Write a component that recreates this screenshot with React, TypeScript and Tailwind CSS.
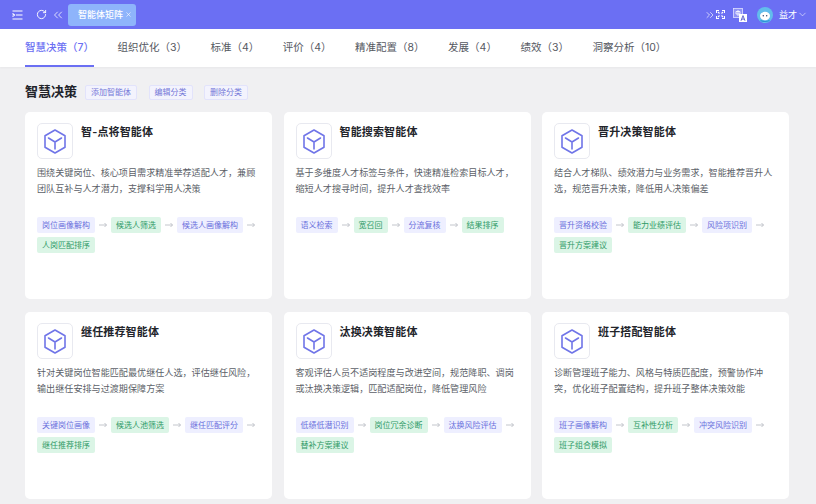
import React from "react";
import { RotateCw, ChevronsLeft, ChevronsRight, ChevronDown, X } from "lucide-react";

const FONT = "font-['Inter','Noto_Sans_CJK_SC',sans-serif]";

const tabs = [
  "智慧决策（7）",
  "组织优化（3）",
  "标准（4）",
  "评价（4）",
  "精准配置（8）",
  "发展（4）",
  "绩效（3）",
  "洞察分析（10）",
];

const cards = [
  {
    title: "智-点将智能体",
    desc: ["围绕关键岗位、核心项目需求精准举荐适配人才，兼顾", "团队互补与人才潜力，支撑科学用人决策"],
    steps: ["岗位画像解构", "候选人筛选", "候选人画像解构", "人岗匹配排序"],
  },
  {
    title: "智能搜索智能体",
    desc: ["基于多维度人才标签与条件，快速精准检索目标人才，", "缩短人才搜寻时间，提升人才查找效率"],
    steps: ["语义检索", "宽召回", "分流复核", "结果排序"],
  },
  {
    title: "晋升决策智能体",
    desc: ["结合人才梯队、绩效潜力与业务需求，智能推荐晋升人", "选，规范晋升决策，降低用人决策偏差"],
    steps: ["晋升资格校验", "能力业绩评估", "风险项识别", "晋升方案建议"],
  },
  {
    title: "继任推荐智能体",
    desc: ["针对关键岗位智能匹配最优继任人选，评估继任风险，", "输出继任安排与过渡期保障方案"],
    steps: ["关键岗位画像", "候选人池筛选", "继任匹配评分", "继任推荐排序"],
  },
  {
    title: "汰换决策智能体",
    desc: ["客观评估人员不适岗程度与改进空间，规范降职、调岗", "或汰换决策逻辑，匹配适配岗位，降低管理风险"],
    steps: ["低绩低潜识别", "岗位冗余诊断", "汰换风险评估", "替补方案建议"],
  },
  {
    title: "班子搭配智能体",
    desc: ["诊断管理班子能力、风格与特质匹配度，预警协作冲", "突，优化班子配置结构，提升班子整体决策效能"],
    steps: ["班子画像解构", "互补性分析", "冲突风险识别", "班子组合模拟"],
  },
];

const CubeIcon = () => (
  <svg width="22" height="25" viewBox="0 0 22 25" fill="none" stroke="#7075e8" strokeWidth="1.6" strokeLinejoin="round">
    <path d="M11 1 L21 6.800 V18.200 L11 24 L1 18.200 V6.800 Z" />
    <path d="M4.500 9 L11 13 L17.500 9 M11 13 V20" strokeLinecap="round" />
  </svg>
);

const MenuIcon = () => (
  <svg width="11" height="10" viewBox="0 0 11 10" fill="none" stroke="#fff" strokeWidth="1.2">
    <path d="M0.500 1h10M4 5h6.500M0.500 9h10M0.500 3.500 2.500 5 0.500 6.500" />
  </svg>
);

const TranslateIcon = () => (
  <svg width="14" height="14" viewBox="0 0 14 14">
    <rect x="0.500" y="0.500" width="9" height="9" fill="#8f92f5" stroke="#dfe0ff" strokeWidth="0.800" />
    <path d="M3 3.500h4v2.500H3zM5 2v6" fill="none" stroke="#fff" strokeWidth="0.800" />
    <rect x="6" y="6" width="8" height="8" fill="#fff" />
    <path d="M8 12.800 10 7.600 12 12.800M8.800 11.100h2.400" fill="none" stroke="#5558c8" strokeWidth="0.900" />
  </svg>
);

const Avatar = () => (
  <svg width="16" height="16" viewBox="0 0 16 16">
    <circle cx="8" cy="8" r="8" fill="#62bdec" />
    <ellipse cx="8" cy="9" rx="5" ry="4.200" fill="#fff" />
    <circle cx="6.300" cy="8.800" r="0.700" fill="#2c3e66" />
    <circle cx="9.700" cy="8.800" r="0.700" fill="#2c3e66" />
    <path d="M3.500 13.500Q8 15.500 12.500 13.500" fill="none" stroke="#2f8fd8" strokeWidth="1.200" />
  </svg>
);

const Arrow = () => (
  <span className="flex w-[16px] justify-center">
    <svg width="8" height="6" viewBox="0 0 8 6" fill="none" stroke="#b4b7bf" strokeWidth="0.800">
      <path d="M0 3h7.500M5.500 1 7.500 3 5.500 5" />
    </svg>
  </span>
);

const Step = ({ label, green }: { label: string; green: boolean }) => (
  <span
    className={`flex h-[16px] items-center rounded-[2px] px-[5px] text-[8px] leading-none ${
      green ? "bg-[#dbf5e6] text-[#2f9a66]" : "bg-[#eeefff] text-[#6a6fdc]"
    }`}
  >
    {label}
  </span>
);

const AgentCard = ({ title, desc, steps }: (typeof cards)[number]) => (
  <div className="h-[187px] rounded-[5px] bg-white px-[12px] pt-[11px]">
    <div className="flex gap-[8px]">
      <div className="flex h-[36px] w-[36px] items-center justify-center rounded-[5px] border border-[#e8e9f0] bg-white">
        <CubeIcon />
      </div>
      <div className="mt-[1px] text-[11px] leading-[16px] font-semibold tracking-[0.15px] text-[#22242a]">{title}</div>
    </div>
    <div className="mt-[6px] text-[9.100px] leading-[16px] whitespace-nowrap text-[#5c5f68]">
      {desc.map((line) => (
        <div key={line}>{line}</div>
      ))}
    </div>
    <div className="mt-[20px] flex flex-wrap items-center gap-y-[3.500px]">
      {steps.map((step, i) => (
        <React.Fragment key={step}>
          <Step label={step} green={i % 2 === 1} />
          {i < steps.length - 1 && <Arrow />}
        </React.Fragment>
      ))}
    </div>
  </div>
);

export default function App() {
  return (
    <div className={`flex h-[504px] w-[816px] flex-col overflow-hidden bg-[#f0f0f2] ${FONT}`}>
      {/* Top bar */}
      <div className="flex h-[29px] items-center bg-[#6b6ff3] pr-[8px] pl-[12px] text-white">
        <MenuIcon />
        <RotateCw size={11} strokeWidth={2} className="ml-[13px]" />
        <ChevronsLeft size={14} strokeWidth={1.300} className="ml-[4px]" />
        <div className="ml-[3px] flex h-[22px] w-[68px] items-center rounded-[3px] bg-[#8eb4fb] pl-[10px] text-[9px] font-medium whitespace-nowrap">
          智能体矩阵
          <X size={7} className="ml-[2px]" />
        </div>
        <div className="ml-auto flex items-center">
          <ChevronsRight size={12} strokeWidth={1.300} />
          <svg width="9" height="9" viewBox="0 0 9 9" fill="none" stroke="#fff" strokeWidth="1.100" className="mr-[8px]">
            <path d="M0.500 3V0.500H3M6 0.500H8.500V3M8.500 6V8.500H6M3 8.500H0.500V6M2 2l1.500 1.500M7 2 5.500 3.500M7 7 5.500 5.500M2 7l1.500-1.500" />
          </svg>
          <TranslateIcon />
          <div className="ml-[10px]">
            <Avatar />
          </div>
          <span className="ml-[6px] text-[9px]">益才</span>
          <ChevronDown size={11} strokeWidth={1.200} />
        </div>
      </div>

      {/* Tabs */}
      <div className="flex h-[38px] gap-[23.500px] bg-white pl-[25px] shadow-[0_1px_2px_rgba(0,0,0,0.04)]">
        {tabs.map((tab, i) => (
          <div
            key={tab}
            className={`flex h-full items-center border-b-2 pt-[1px] text-[10.500px] whitespace-nowrap ${
              i === 0 ? "border-[#6b6ff3] font-medium text-[#6b6ff3]" : "border-transparent text-[#55585f]"
            }`}
          >
            {tab}
          </div>
        ))}
      </div>

      {/* Section header */}
      <div className="mt-[16px] flex h-[18px] items-center pl-[25px]">
        <h2 className="text-[13px] font-semibold text-[#22242a]">智慧决策</h2>
        <div className="ml-[8px] flex gap-[11.500px]">
          {["添加智能体", "编辑分类", "删除分类"].map((label) => (
            <button
              key={label}
              className="flex h-[15px] items-center rounded-[2px] border border-[#e2e3fb] bg-[#f3f3fd] px-[5px] text-[8px] text-[#7478d8]"
            >
              {label}
            </button>
          ))}
        </div>
      </div>

      {/* Cards */}
      <div className="mt-[11px] ml-[25px] grid w-[764px] grid-cols-3 gap-x-[11.500px] gap-y-[13px]">
        {cards.map((card) => (
          <AgentCard key={card.title} {...card} />
        ))}
      </div>
    </div>
  );
}
